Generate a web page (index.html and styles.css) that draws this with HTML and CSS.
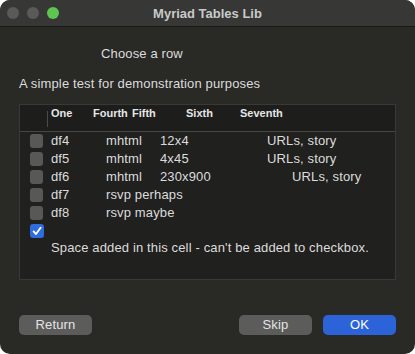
FILE: index.html
```html
<!DOCTYPE html>
<html>
<head>
<meta charset="utf-8">
<link rel="stylesheet" href="styles.css">
</head>
<body>
<div class="window">
  <div class="titlebar">
    <div class="lights">
      <span class="light gray"></span>
      <span class="light gray"></span>
      <span class="light green"></span>
    </div>
    <div class="title">Myriad Tables Lib</div>
  </div>
  <div class="content">
    <div class="prompt">Choose a row</div>
    <div class="desc">A simple test for demonstration purposes</div>
    <div class="table">
      <div class="thead">
        <div class="hcheck"><span class="divider"></span></div>
        <div class="h1">One</div>
        <div class="h2">Fourth</div>
        <div class="h3">Fifth</div>
        <div class="h4">Sixth</div>
        <div class="h5">Seventh</div>
      </div>
      <div class="tbody">
        <div class="row"><span class="cb"></span><span>df4</span><span>mhtml</span><span>12x4</span><span>URLs, story</span></div>
        <div class="row"><span class="cb"></span><span>df5</span><span>mhtml</span><span>4x45</span><span>URLs, story</span></div>
        <div class="row"><span class="cb"></span><span>df6</span><span>mhtml</span><span>230x900</span><span class="shift">URLs, story</span></div>
        <div class="row"><span class="cb"></span><span>df7</span><span class="wide">rsvp perhaps</span></div>
        <div class="row"><span class="cb"></span><span>df8</span><span class="wide">rsvp maybe</span></div>
        <div class="row"><span class="cb checked"><svg viewBox="0 0 14 14" width="14" height="14"><path d="M3.6 7.4 L6 10 L10.6 3.8" fill="none" stroke="#fff" stroke-width="1.9" stroke-linecap="round" stroke-linejoin="round"/></svg></span></div>
        <div class="note">Space added in this cell - can't be added to checkbox.</div>
      </div>
    </div>
    <div class="buttons">
      <button class="btn">Return</button>
      <div class="right">
        <button class="btn">Skip</button>
        <button class="btn primary">OK</button>
      </div>
    </div>
  </div>
</div>
</body>
</html>
```

FILE: styles.css
```css
html, body {
  margin: 0;
  padding: 0;
  background: #ffffff;
}
body {
  font-family: "Liberation Sans", Arial, sans-serif;
  color: #dcdcdc;
  letter-spacing: 0.14px;
}
.window {
  width: 415px;
  height: 354px;
  border-radius: 10px;
  overflow: hidden;
  background: #292926;
  display: flex;
  flex-direction: column;
}
.titlebar {
  height: 27px;
  flex: none;
  background: #373735;
  border-bottom: 1px solid #1a1a18;
  box-sizing: border-box;
  position: relative;
  display: flex;
  align-items: center;
  justify-content: center;
}
.lights {
  position: absolute;
  left: 7px;
  top: 7px;
  display: flex;
  gap: 8px;
}
.light {
  width: 12px;
  height: 12px;
  border-radius: 50%;
  display: block;
}
.light.gray { background: #5a5a59; }
.light.green { background: #5ec452; }
.title {
  font-size: 13px;
  font-weight: bold;
  color: #c9c9c9;
  padding-top: 1px;
  letter-spacing: 0;
}
.content {
  flex: 1;
  display: flex;
  flex-direction: column;
  padding: 0 19px 0 19px;
}
.prompt {
  font-size: 13px;
  margin-top: 19px;
  height: 16px;
  line-height: 16px;
  padding-left: 82px;
}
.desc {
  font-size: 13px;
  margin-top: 14px;
  height: 16px;
  line-height: 16px;
}
.table {
  margin-top: 12px;
  width: 377px;
  height: 176px;
  box-sizing: border-box;
  border: 1px solid #393937;
  background: #20201e;
  display: flex;
  flex-direction: column;
}
.thead {
  height: 27px;
  flex: none;
  box-sizing: border-box;
  background: #1d1d1b;
  border-bottom: 1px solid #464644;
  display: grid;
  grid-template-columns: 31px 42px 39px 54px 54px auto;
  font-size: 11px;
  font-weight: bold;
  line-height: 14px;
  padding-top: 1px;
  color: #e6e6e6;
  letter-spacing: 0;
}
.hcheck {
  position: relative;
}
.divider {
  position: absolute;
  left: 27px;
  top: 5px;
  width: 1px;
  height: 16px;
  background: #4a4a48;
}
.tbody {
  padding-top: 0;
  font-size: 13px;
}
.row {
  height: 18px;
  display: grid;
  grid-template-columns: 31px 55px 54px 107px auto;
  align-items: center;
  line-height: 16px;
}
.row .wide {
  grid-column: span 2;
}
.shift {
  padding-left: 25px;
}
.cb {
  width: 13px;
  height: 14px;
  border-radius: 3px;
  background: #585856;
  margin-left: 10px;
  display: flex;
  align-items: center;
  justify-content: center;
}
.cb.checked {
  background: #2f6ce0;
  width: 14px;
}
.note {
  padding-left: 31px;
  height: 16px;
  line-height: 16px;
}
.buttons {
  margin-top: 35px;
  display: flex;
  justify-content: space-between;
}
.right {
  display: flex;
  gap: 11px;
}
.btn {
  width: 73px;
  height: 20px;
  border: none;
  border-radius: 5px;
  background: #5c5c5b;
  color: #e4e4e4;
  font-family: "Liberation Sans", Arial, sans-serif;
  font-size: 13px;
  padding: 0;
  line-height: 20px;
  letter-spacing: 0.14px;
}
.btn.primary {
  background: #2c63d8;
  color: #ffffff;
}
```
